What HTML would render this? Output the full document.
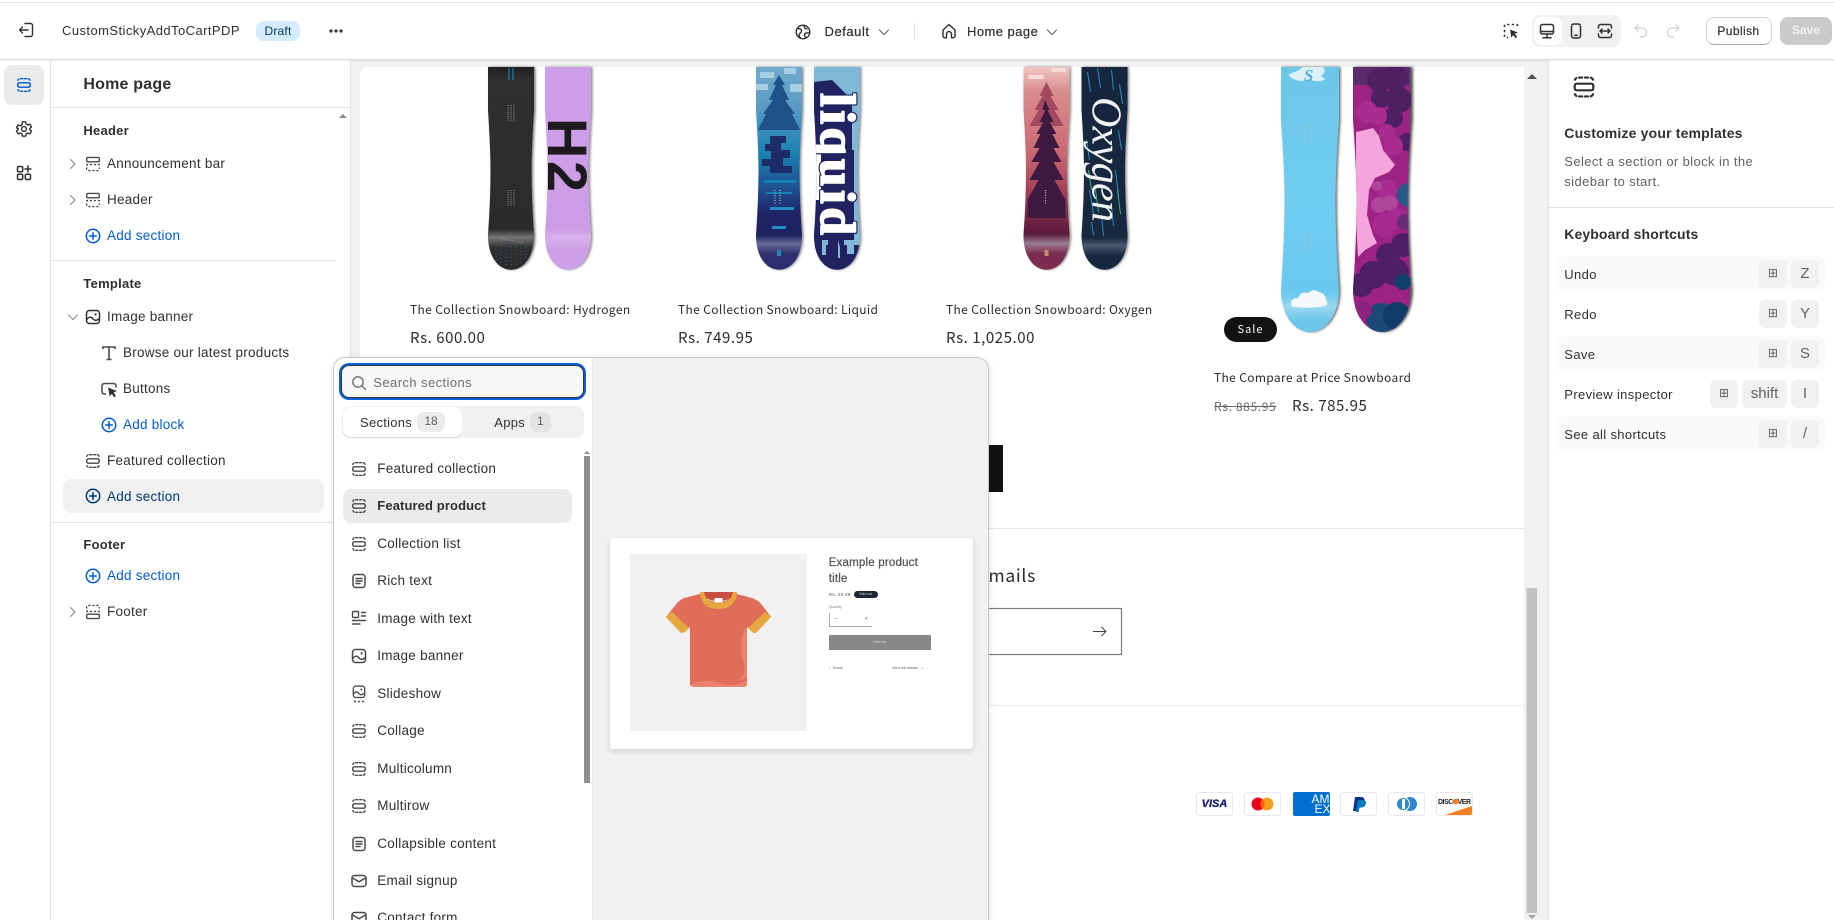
<!DOCTYPE html>
<html><head><meta charset="utf-8"><title>Editor</title>
<style>
html,body{margin:0;padding:0;width:1834px;height:920px;overflow:hidden;background:#fff}
body{font-family:"Liberation Sans",sans-serif;color:#303030;position:relative}
.a{position:absolute;white-space:nowrap}
.t{position:absolute;white-space:nowrap;line-height:20px;font-size:13.5px;letter-spacing:.25px;color:#303030}
.b{font-weight:700;font-size:13px;letter-spacing:.25px}
.blue{color:#005bd3}
.n{color:#00367a}
.g{color:#616161}
.p{position:absolute;white-space:nowrap;font-family:"Noto Sans CJK JP",sans-serif;color:#2b2b2b;line-height:24px}
.pt{font-size:12px;letter-spacing:.35px}
.pp{font-size:15px;letter-spacing:.55px}
.i{position:absolute;width:20px;height:20px;overflow:visible}
.key{position:absolute;width:28px;height:28px;border-radius:6px;background:#f1f1f1;text-align:center;line-height:27px;font-size:15px;color:#616161}
.key.c{font-family:"DejaVu Sans",sans-serif;font-size:12px}
.row{position:absolute;left:1556px;width:269px;height:36px;border-radius:8px;background:#fafafa}
.pay{position:absolute;top:792px;width:37px;height:24px;border:1px solid #e8e8e8;border-radius:3px;box-sizing:border-box;background:#fff;overflow:hidden;text-align:center}
.k{font-size:13px;letter-spacing:.35px}
</style></head><body>
<svg width="0" height="0" style="position:absolute"><defs>
<g id="sec" fill="none" stroke-width="1.45" stroke-linecap="round"><rect x="3.8" y="7.8" width="12.4" height="4.4" rx="1.4"/><path d="M3.8 5.6V5.7A2.4 2.4 0 0 1 6.2 3.7H13.8A2.4 2.4 0 0 1 16.2 5.7V5.6" stroke-dasharray="2.1 1.8"/><path d="M3.8 14.4V14.3A2.4 2.4 0 0 0 6.2 16.3H13.8A2.4 2.4 0 0 0 16.2 14.3V14.4" stroke-dasharray="2.1 1.8"/></g>
<g id="hdr" fill="none" stroke-width="1.4"><rect x="3.7" y="3.4" width="12.6" height="4.4" rx="1.2"/><path d="M3.7 11.5V10.6H16.3V11.5M3.7 13.5V15.4A1.2 1.2 0 0 0 4.9 16.6H15.1A1.2 1.2 0 0 0 16.3 15.4V13.5" stroke-dasharray="2.2 1.8"/></g>
<g id="ftr" fill="none" stroke-width="1.4"><rect x="3.7" y="12.2" width="12.6" height="4.4" rx="1.2"/><path d="M3.7 8.5V9.4H16.3V8.5M3.7 6.5V4.6A1.2 1.2 0 0 1 4.9 3.4H15.1A1.2 1.2 0 0 1 16.3 4.6V6.5" stroke-dasharray="2.2 1.8"/></g>
<g id="plus" fill="none" stroke-width="1.5"><circle cx="10" cy="10" r="6.7"/><path d="M10 6.7V13.3M6.7 10H13.3" stroke-linecap="round"/></g>
<g id="img" fill="none" stroke-width="1.5"><rect x="3.5" y="3.5" width="13" height="13" rx="3"/><circle cx="12.6" cy="7.4" r="1.1" fill="currentColor" stroke="none"/><path d="M3.8 12.5C6 9.5 8 9.5 10 12c2 2.2 3.6 1.6 6.4-.4"/></g>
<g id="txt" fill="none" stroke-width="1.5"><rect x="4" y="3.5" width="12" height="13" rx="2.5"/><path d="M7 7.5H13M7 10H13M7 12.5H11" stroke-linecap="round"/></g>
<g id="mail" fill="none" stroke-width="1.5"><rect x="3" y="4.5" width="14" height="11" rx="2.5"/><path d="M3.5 7L10 10.8 16.5 7"/></g>
<path id="cv" d="M7.5 5.5L12 10 7.5 14.5" fill="none" stroke-width="1.2" stroke-linecap="round" stroke-linejoin="round"/>
<path id="dn" d="M5.5 8L10 12.5 14.5 8" fill="none" stroke-width="1.1" stroke-linecap="round" stroke-linejoin="round"/>
<path id="bp" d="M0 67H46V110Q43.5 150 43.5 170Q43.5 200 46 235C46 258 35 269.7 23 269.7C11 269.7 0 258 0 235Q2.5 200 2.5 170Q2.5 150 0 110Z"/>
<path id="bq" d="M0 67H58V120Q54.5 170 54.5 200Q54.5 240 58 290C58 316 44 332 29 332C14 332 0 316 0 290Q3.5 240 3.5 200Q3.5 170 0 120Z"/>
<clipPath id="cb"><use href="#bp"/></clipPath>
<clipPath id="cq"><use href="#bq"/></clipPath>
<filter id="sh" x="-30%" y="-5%" width="160%" height="110%"><feGaussianBlur stdDeviation="1.2"/></filter>
<linearGradient id="gA" x1="0" y1="0" x2="0" y2="1"><stop offset="0" stop-color="#1f1f1f"/><stop offset=".06" stop-color="#2f2f2f"/><stop offset=".8" stop-color="#2b2b2b"/><stop offset=".84" stop-color="#757575"/><stop offset=".89" stop-color="#2e2e2e"/><stop offset="1" stop-color="#2a2a2a"/></linearGradient>
<linearGradient id="gB" x1="0" y1="0" x2="0" y2="1"><stop offset="0" stop-color="#cd9fe8"/><stop offset=".8" stop-color="#cc9de6"/><stop offset=".84" stop-color="#d6b2ea"/><stop offset=".9" stop-color="#cd9fe6"/></linearGradient>
<linearGradient id="gC" x1="0" y1="0" x2="0" y2="1"><stop offset="0" stop-color="#71aacd"/><stop offset=".18" stop-color="#5d9dc4"/><stop offset=".42" stop-color="#1b82b2"/><stop offset=".6" stop-color="#1f4f90"/><stop offset=".72" stop-color="#1f2466"/><stop offset=".83" stop-color="#1d2462"/><stop offset=".87" stop-color="#6c6a9c"/><stop offset=".92" stop-color="#30306e"/><stop offset="1" stop-color="#2b2c70"/></linearGradient>
<linearGradient id="gE" x1="0" y1="0" x2="0" y2="1"><stop offset="0" stop-color="#eec6c2"/><stop offset=".12" stop-color="#d98c8c"/><stop offset=".42" stop-color="#c96a72"/><stop offset=".62" stop-color="#a13f56"/><stop offset=".82" stop-color="#5a1a3a"/><stop offset=".87" stop-color="#9c7a90"/><stop offset=".92" stop-color="#7a2c50"/><stop offset="1" stop-color="#7d2d50"/></linearGradient>
<linearGradient id="gF" x1="0" y1="0" x2="0" y2="1"><stop offset="0" stop-color="#16263f"/><stop offset=".84" stop-color="#17283f"/><stop offset=".88" stop-color="#4a5a6e"/><stop offset=".93" stop-color="#16283f"/></linearGradient>
<linearGradient id="gG" x1="0" y1="0" x2="0" y2="1"><stop offset="0" stop-color="#6cc6e8"/><stop offset=".5" stop-color="#70cdf0"/><stop offset=".85" stop-color="#69c8ee"/><stop offset=".9" stop-color="#9cd8f0"/><stop offset=".95" stop-color="#6ec6e8"/></linearGradient>
</defs></svg>

<!-- preview background -->
<div class="a" style="left:351px;top:59px;width:1197px;height:861px;background:#f1f1f1"></div>
<div class="a" style="left:360px;top:67px;width:1164px;height:853px;background:#fff;border-radius:8px 0 0 0"></div>

<svg class="a" style="left:0;top:0" width="1834" height="920" viewBox="0 0 1834 920">
<!-- Board A -->
<use href="#bp" transform="translate(489.5,0)" fill="#777" filter="url(#sh)"/>
<g transform="translate(488,0)" clip-path="url(#cb)"><rect width="46" height="203" y="67" fill="url(#gA)"/>
<path d="M21 68V80M25 68V80" stroke="#1e6e9e" stroke-width="1.5"/>
<path d="M20 105V121M23 105V121M26 105V121M20 190V206M23 190V206M26 190V206" stroke="#9a9a9a" stroke-dasharray="1 1.2"/>
<path d="M8 246V262M13 244V265M18 243V267M23 243V267M28 243V266M33 244V264M38 247V262" stroke="#2d6c92" stroke-dasharray="1 2.5"/>
<path d="M12 238L35 243" stroke="#999" stroke-dasharray="1 1.5"/></g>
<!-- Board B -->
<use href="#bp" transform="translate(546.5,0)" fill="#888" filter="url(#sh)"/>
<g transform="translate(545,0)" clip-path="url(#cb)"><rect width="46" height="203" y="67" fill="url(#gB)"/>
<text transform="translate(3,118) rotate(90)" font-family="Liberation Sans" font-weight="700" font-size="56" fill="#1c1a1e" textLength="74">H2</text></g>
<!-- Board C liquid L -->
<use href="#bp" transform="translate(757.5,0)" fill="#888" filter="url(#sh)"/>
<g transform="translate(756,0)" clip-path="url(#cb)"><rect width="46" height="203" y="67" fill="url(#gC)"/>
<path d="M4 72H18V78H4ZM28 68H40V74H28ZM0 84H12V90H0ZM34 84H46V92H34Z" fill="#a8cee2"/>
<path d="M23 75L29 85H26L33 100H29L39 114H36L44 130H2L10 114H7L17 100H13L20 85H17Z" fill="#1f5288"/>
<path d="M14 136H30V143H25V150H34V158H27V166H36V173H14V166H6V159H15V151H9V144H14Z" fill="#1d2c66"/>
<path d="M8 180H40V183H8ZM10 192H36V194H10Z" fill="#1480b6"/>
<path d="M19 190V205M24 190V205" stroke="#cfd6e6" stroke-dasharray="1 1.5"/>
<path d="M14 207H38V210H14ZM16 226H30V229H16Z" fill="#1f8fc6"/><rect x="21" y="250" width="4" height="6" fill="#2588b6"/></g>
<!-- Board D liquid R -->
<use href="#bp" transform="translate(815.5,0)" fill="#888" filter="url(#sh)"/>
<g transform="translate(814,0)" clip-path="url(#cb)"><rect width="46" height="203" y="67" fill="#7fb7d6"/>
<path d="M0 82L18 80L38 100V150H40V240H30V262L24 240V262H14V240H8V262H0Z" fill="#21225f"/>
<path d="M0 145H7V200H0Z" fill="#fff"/>
<path d="M0 245H6V255H12V245H20V258H26V245H33V254H40V245H46V270H0Z" fill="#21225f"/>
<text transform="translate(7,93) rotate(90)" font-family="Liberation Serif" font-weight="700" font-size="50" fill="#fff" stroke="#21225f" stroke-width="4" stroke-linejoin="round" textLength="142">liquid</text>
<text transform="translate(7,93) rotate(90)" font-family="Liberation Serif" font-weight="700" font-size="50" fill="#fff" stroke="#fff" stroke-width="1.6" stroke-linejoin="round" textLength="142">liquid</text></g>
<!-- Board E oxygen L -->
<use href="#bp" transform="translate(1025,0)" fill="#888" filter="url(#sh)"/>
<g transform="translate(1023.5,0)" clip-path="url(#cb)"><rect width="46" height="203" y="67" fill="url(#gE)"/>
<path d="M5 75H20V79H5ZM28 68H42V72H28Z" fill="#f5dcd8"/>
<path d="M23 82L30 96H27L35 110H31L40 126H6L15 110H11L19 96H16Z" fill="#a44a60"/>
<path d="M21.5 100L26 110H24L30 122H26L33 134H29L36 148H30L38 162H30L40 180H31L42 200V218H4V200L15 180H6L16 162H8L16 148H10L17 134H13L20 122H16L22 110H19Z" fill="#3f1a40"/>
<path d="M22 190V205" stroke="#cfc0c8" stroke-dasharray="1 1.5" stroke-width="1.2"/><rect x="21" y="250" width="4" height="6" fill="#c08a70"/></g>
<!-- Board F oxygen R -->
<use href="#bp" transform="translate(1083,0)" fill="#888" filter="url(#sh)"/>
<g transform="translate(1081.5,0)" clip-path="url(#cb)"><rect width="46" height="203" y="67" fill="url(#gF)"/>
<path d="M6 72L9 92M16 68L19 88M30 70L32 90M38 84L41 104M5 140L8 160M37 130L40 150M8 190L12 214M34 170L37 196M20 215L22 236M30 205L32 226M10 222L12 235" stroke="#2a8cc0" stroke-width="1"/>
<path d="M7 170L10 190M36 190L39 214M14 190L17 212" stroke="#2fb88a" stroke-width="1"/>
<text transform="translate(11,97) rotate(90)" font-family="Liberation Serif" font-style="italic" font-size="42" fill="#f2f4f4" textLength="125">Oxygen</text></g>
<!-- Board G -->
<use href="#bq" transform="translate(1282.5,0)" fill="#666" filter="url(#sh)"/>
<g transform="translate(1281,0)" clip-path="url(#cq)"><rect width="58" height="266" y="67" fill="url(#gG)"/>
<path d="M8 74Q16 72 22 67H42Q46 72 40 76Q44 80 46 78Q38 84 28 79Q18 84 8 76Z" fill="#dcf0f8"/>
<text x="23" y="81" font-family="Liberation Serif" font-weight="700" font-style="italic" font-size="17" fill="#4fb0de">S</text>
<path d="M24 125V145M30 125V145M24 232V252M30 232V252" stroke="#b8c8b8" stroke-dasharray="1 1.5"/>
<path d="M10 304Q10 298 17 298Q20 291 27 293Q32 288 38 292Q45 294 45 300Q48 304 44 306Q30 309 14 307Q10 307 10 304Z" fill="#f4f8fa"/>
</g>
<!-- Board H -->
<use href="#bq" transform="translate(1355,0)" fill="#555" filter="url(#sh)"/>
<g transform="translate(1353,0)" clip-path="url(#cq)"><rect width="57" height="266" y="67" fill="#9c2384"/>
<rect y="67" width="57" height="18" fill="#5a2c6e"/>
<g fill="#4e1f62"><circle cx="26" cy="80" r="12"/><circle cx="42" cy="78" r="13"/><circle cx="28" cy="98" r="10"/><circle cx="46" cy="100" r="13"/><circle cx="40" cy="118" r="10"/><circle cx="54" cy="142" r="9"/></g>
<g fill="#a92c90"><circle cx="14" cy="112" r="11"/><circle cx="25" cy="116" r="9"/><circle cx="34" cy="132" r="8"/></g>
<path d="M3 132L12 130L20 128L26 136L30 150L42 165L36 172L22 178L16 190L14 215L20 235L24 243L12 250L5 257L3 220Z" fill="#f6a4dc"/>
<g fill="#a92c90"><circle cx="40" cy="146" r="10"/><circle cx="34" cy="190" r="10"/></g>
<g fill="#b0459c"><circle cx="26" cy="205" r="8"/><circle cx="37" cy="203" r="8"/><circle cx="24" cy="186" r="5"/></g>
<g fill="#a62a90"><circle cx="32" cy="225" r="12"/><circle cx="44" cy="218" r="10"/></g>
<circle cx="56" cy="195" r="12" fill="#245a88"/><circle cx="52" cy="222" r="8" fill="#6a2c78"/>
<g fill="#4f1f66"><circle cx="35" cy="255" r="12"/><circle cx="50" cy="245" r="12"/><circle cx="20" cy="275" r="14"/><circle cx="42" cy="272" r="14"/><circle cx="8" cy="285" r="12"/></g>
<circle cx="50" cy="282" r="8" fill="#0f3f6c"/><circle cx="28" cy="318" r="15" fill="#1b4a78"/><circle cx="44" cy="316" r="14" fill="#113a66"/><circle cx="10" cy="310" r="9" fill="#8e2280"/></g>

<!-- up arrow preview scrollbar -->
<path d="M1527 79L1532 74 1537 79Z" fill="#505050"/>
<rect x="1526.5" y="588" width="10.5" height="325" fill="#c1c1c1"/>
<path d="M1528 915H1536L1532 919Z" fill="#a3a3a3"/>
<!-- lines -->
<rect x="360" y="528" width="1164" height="1" fill="#e8e8e8"/>
<rect x="360" y="705" width="1164" height="1" fill="#ededed"/>
<rect x="700" y="445" width="303" height="47" fill="#121212"/>
<rect x="700" y="608.5" width="421.5" height="46" fill="#fff" stroke="#7c7c7c" stroke-width="1.2"/>
<path d="M1093 631.5H1106M1101.5 627L1106 631.5 1101.5 636" fill="none" stroke="#444" stroke-width="1"/>
</svg>

<div class="p pt" style="left:410px;top:298px">The Collection Snowboard: Hydrogen</div>
<div class="p pp" style="left:410px;top:326px">Rs. 600.00</div>
<div class="p pt" style="left:678px;top:298px">The Collection Snowboard: Liquid</div>
<div class="p pp" style="left:678px;top:326px">Rs. 749.95</div>
<div class="p pt" style="left:946px;top:298px">The Collection Snowboard: Oxygen</div>
<div class="p pp" style="left:946px;top:326px">Rs. 1,025.00</div>
<div class="a" style="left:1224px;top:317px;width:53px;height:25px;border-radius:13px;background:#121212;color:#fff;font-family:'Noto Sans CJK JP',sans-serif;font-size:11px;letter-spacing:1px;text-align:center;line-height:24px">Sale</div>
<div class="p pt" style="left:1214px;top:366px">The Compare at Price Snowboard</div>
<div class="p" style="left:1214px;top:395px;font-size:12px;letter-spacing:.65px;color:#666;text-decoration:line-through">Rs. 885.95</div>
<div class="p pp" style="left:1292px;top:394px">Rs. 785.95</div>
<div class="p" style="left:700px;width:336px;top:564px;text-align:right;font-size:17.5px;letter-spacing:.7px">Subscribe to our emails</div>

<!-- payment -->
<div class="pay" style="left:1196px;font:italic 700 11px/22px 'Liberation Sans',sans-serif;color:#1a1f71;-webkit-text-stroke:.3px #1a1f71">VISA</div>
<div class="pay" style="left:1244px"><svg width="35" height="22"><circle cx="13" cy="11" r="6.5" fill="#eb001b"/><circle cx="22" cy="11" r="6.5" fill="#f79e1b"/><path d="M17.5 6.3a6.5 6.5 0 0 1 0 9.4a6.5 6.5 0 0 1 0-9.4Z" fill="#ff5f00"/></svg></div>
<div class="a" style="left:1292.5px;top:792px;width:37px;height:24px;background:#016fd0;border-radius:2px;overflow:hidden;color:#fff;font:400 12px/9px 'Liberation Sans',sans-serif"><div style="position:absolute;left:19px;top:3px">AM</div><div style="position:absolute;left:22px;top:13px">EX</div></div>
<div class="pay" style="left:1340px"><svg width="35" height="22"><path d="M14 4H20Q24 4 23.5 8Q23 12.5 18 12.5H16.5L15.5 18H12Z" fill="#003087"/><path d="M16.8 7H22Q25.5 7.5 25 10.5Q24 14.5 20 14.5H18.5L17.5 19H14.8Z" fill="#0079c1"/></svg></div>
<div class="pay" style="left:1388px"><svg width="35" height="22"><circle cx="21" cy="11" r="7" fill="#2f87d0"/><circle cx="14" cy="11" r="7" fill="#fff"/><circle cx="14" cy="11" r="6" fill="#2f87d0"/><rect x="13" y="6" width="3" height="10" fill="#fff"/></svg></div>
<div class="pay" style="left:1436px"><svg width="35" height="22"><path d="M8 22L35 13V22Z" fill="#f48120"/><text x="1" y="11" font-family="Liberation Sans" font-weight="700" font-size="7" fill="#222" textLength="33">DISCOVER</text><circle cx="19" cy="8.5" r="2.8" fill="#f48120"/></svg></div>

<!-- top bar -->
<div class="a" style="left:0;top:0;width:1834px;height:59px;background:#fff;border-bottom:1px solid #dcdcdc;box-shadow:0 1px 2px rgba(0,0,0,.08);z-index:3"></div>
<div class="a" style="left:0;top:2px;width:1834px;height:1px;background:#eee4e8;z-index:4"></div>
<div class="a" style="left:0;top:0;width:1834px;height:60px;z-index:5">
<svg class="i" style="left:16px;top:20px"><path d="M9 3.5H14.5A2 2 0 0 1 16.5 5.5V14.5A2 2 0 0 1 14.5 16.5H9M12 10H3.5M6.5 7L3.5 10 6.5 13" fill="none" stroke="#303030" stroke-width="1.4" stroke-linecap="round" stroke-linejoin="round"/></svg>
<div class="t" style="left:62px;top:21px;font-size:13px;letter-spacing:.43px">CustomStickyAddToCartPDP</div>
<div class="a" style="left:256px;top:21px;width:44px;height:20px;border-radius:8px;background:#d5ebff;color:#003a5a;font-size:12px;text-align:center;line-height:20px;letter-spacing:.2px">Draft</div>
<svg class="i" style="left:326px;top:21px"><circle cx="5" cy="10" r="1.6" fill="#303030"/><circle cx="10" cy="10" r="1.6" fill="#303030"/><circle cx="15" cy="10" r="1.6" fill="#303030"/></svg>
<svg class="i" style="left:793px;top:21.5px"><g fill="none" stroke="#303030" stroke-width="1.4"><circle cx="10" cy="10" r="6.8"/><path d="M4 6.5C7 6.5 8.5 7 8.5 9S6 11 6 13 7.5 16 8 16.5M11 3.5C11 6 12.5 7 14.5 7M16.5 11C14 10.5 11.5 11 11.5 13S13 15.5 13.5 16"/></g></svg>
<div class="t" style="left:824.5px;top:21.5px;font-size:13px;letter-spacing:.55px;-webkit-text-stroke:.2px #303030">Default</div>
<svg class="i" style="left:874px;top:21.5px;stroke:#616161"><use href="#dn"/></svg>
<div class="a" style="left:914px;top:23px;width:1px;height:16px;background:#e3e3e3"></div>
<svg class="i" style="left:939px;top:21px"><path d="M10 3.5L16 9V15A1.8 1.8 0 0 1 14.2 16.8H12.5V13A2.5 2.5 0 0 0 7.5 13V16.8H5.8A1.8 1.8 0 0 1 4 15V9Z" fill="none" stroke="#303030" stroke-width="1.4" stroke-linejoin="round"/></svg>
<div class="t" style="left:967px;top:21.5px;font-size:13px;letter-spacing:.45px;-webkit-text-stroke:.2px #303030">Home page</div>
<svg class="i" style="left:1042px;top:21.5px;stroke:#616161"><use href="#dn"/></svg>
<svg class="i" style="left:1501px;top:21px"><path d="M3.5 6V4.5A1 1 0 0 1 4.5 3.5H15.5A1 1 0 0 1 16.5 4.5V7M3.5 9V15.5A1 1 0 0 0 4.5 16.5H7" fill="none" stroke="#303030" stroke-width="1.6" stroke-dasharray="2.2 2.4"/><path d="M9 8.5L17 11.5 13.8 12.8 16.2 16 14.6 17.2 12.2 14 10.3 16.8Z" fill="#303030"/></svg>
<div class="a" style="left:1531.5px;top:15px;width:89.5px;height:32px;background:#f1f1f1;border-radius:8px"></div>
<div class="a" style="left:1533.5px;top:17px;width:28px;height:28px;background:#fff;border-radius:7px"></div>
<svg class="i" style="left:1537px;top:21px"><g fill="none" stroke="#303030" stroke-width="1.5"><rect x="3.5" y="3.5" width="13" height="9.5" rx="2"/><path d="M3.5 10.5H16.5M10 13V16.5M6 16.8H14" stroke-linecap="round"/></g></svg>
<svg class="i" style="left:1566px;top:21px"><g fill="none" stroke="#303030" stroke-width="1.5"><rect x="5.5" y="3" width="9" height="14" rx="2.2"/><path d="M8.8 14.2H11.2" stroke-linecap="round"/></g></svg>
<svg class="i" style="left:1595px;top:21px"><g fill="none" stroke="#303030" stroke-width="1.5" stroke-linecap="round" stroke-linejoin="round"><path d="M3.5 7V5.5A2 2 0 0 1 5.5 3.5H14.5A2 2 0 0 1 16.5 5.5V7M3.5 13V14.5A2 2 0 0 0 5.5 16.5H14.5A2 2 0 0 0 16.5 14.5V13M5 10H15M7 8L5 10 7 12M13 8L15 10 13 12"/></g></svg>
<svg class="i" style="left:1631px;top:21px"><path d="M7 4L4 7 7 10M4 7H11A4.5 4.5 0 0 1 11 16H9" fill="none" stroke="#d6d6d6" stroke-width="1.5" stroke-linecap="round" stroke-linejoin="round"/></svg>
<svg class="i" style="left:1663px;top:21px"><path d="M13 4L16 7 13 10M16 7H9A4.5 4.5 0 0 0 9 16H11" fill="none" stroke="#d6d6d6" stroke-width="1.5" stroke-linecap="round" stroke-linejoin="round"/></svg>
<div class="a" style="left:1705.5px;top:17px;width:66px;height:28px;box-sizing:border-box;background:#fff;border:1px solid #d4d4d4;border-bottom:1.5px solid #a8a8a8;border-radius:8px;text-align:center;font-size:12px;line-height:26px;letter-spacing:.4px;font-weight:400;-webkit-text-stroke:.2px #303030">Publish</div>
<div class="a" style="left:1780px;top:17px;width:52px;height:28px;background:#cacaca;border-radius:8px;text-align:center;color:#f4f4f4;font-size:12px;line-height:27px;font-weight:700">Save</div>
</div>

<!-- left rail -->
<div class="a" style="left:0;top:60px;width:50px;height:860px;background:#fff;border-right:1px solid #e3e3e3;z-index:2"></div>
<div class="a" style="left:4px;top:65px;width:40px;height:40px;background:#ebebeb;border-radius:8px;z-index:2"></div>
<svg class="i" style="left:14px;top:75px;z-index:2;stroke:#005bd3"><use href="#sec"/></svg>
<svg class="i" style="left:14px;top:119px;z-index:2"><circle cx="10" cy="10" r="2.4" fill="none" stroke="#303030" stroke-width="1.4"/><path d="M8.4 2.8h3.2l.5 2.2 1.6.9 2.2-.7 1.6 2.8-1.7 1.5v1l1.7 1.5-1.6 2.8-2.2-.7-1.6.9-.5 2.2H8.4l-.5-2.2-1.6-.9-2.2.7-1.6-2.8 1.7-1.5v-1L2.5 8.9l1.6-2.8 2.2.7 1.6-.9z" fill="none" stroke="#303030" stroke-width="1.4" stroke-linejoin="round"/></svg>
<svg class="i" style="left:14px;top:163px;z-index:2"><g fill="none" stroke="#303030" stroke-width="1.5"><rect x="3.5" y="3.5" width="5.2" height="5.2" rx="1.2"/><rect x="3.5" y="11.3" width="5.2" height="5.2" rx="1.2"/><rect x="11.3" y="11.3" width="5.2" height="5.2" rx="1.2"/><path d="M13.9 3V9M10.9 6H16.9" stroke-linecap="round"/></g></svg>

<!-- sidebar -->
<div class="a" style="left:51px;top:60px;width:300px;height:860px;background:#fff;border-right:1px solid #e3e3e3;box-sizing:border-box;z-index:2"></div>
<div style="position:absolute;left:0;top:0;z-index:2;width:0;height:0">
<div class="t" style="left:83.4px;top:74.5px;font-weight:700;font-size:16px;letter-spacing:.2px">Home page</div>
<div class="a" style="left:51px;top:107px;width:299px;height:1px;background:#e3e3e3"></div>
<svg class="a" style="left:339px;top:113px" width="8" height="6"><path d="M0 5L4 1 8 5Z" fill="#8a8a8a"/></svg>

<div class="t b" style="left:83.4px;top:120.7px">Header</div>
<svg class="i" style="left:63px;top:153.5px;stroke:#8a8a8a"><use href="#cv"/></svg>
<svg class="i" style="left:83px;top:153.5px;stroke:#4a4a4a"><use href="#hdr"/></svg>
<div class="t" style="left:107px;top:153.5px">Announcement bar</div>
<svg class="i" style="left:63px;top:189.5px;stroke:#8a8a8a"><use href="#cv"/></svg>
<svg class="i" style="left:83px;top:189.5px;stroke:#4a4a4a"><use href="#hdr"/></svg>
<div class="t" style="left:107px;top:189.5px">Header</div>
<svg class="i" style="left:83px;top:225.5px;stroke:#005bd3"><use href="#plus"/></svg>
<div class="t blue" style="left:107px;top:225.5px">Add section</div>
<div class="a" style="left:51px;top:260px;width:285px;height:1px;background:#e3e3e3"></div>

<div class="t b" style="left:83.4px;top:273.7px">Template</div>
<svg class="i" style="left:63px;top:306.7px;stroke:#8a8a8a"><use href="#dn"/></svg>
<svg class="i" style="left:83px;top:306.7px;stroke:#303030;color:#303030"><use href="#img"/></svg>
<div class="t" style="left:107px;top:306.7px">Image banner</div>
<svg class="i" style="left:99px;top:342.7px"><path d="M4 6V4H16V6M10 4V16.5M7.5 16.5H12.5" fill="none" stroke="#4a4a4a" stroke-width="1.6"/></svg>
<div class="t" style="left:123px;top:342.7px">Browse our latest products</div>
<svg class="i" style="left:99px;top:378.7px"><path d="M7 15H5.5A2.5 2.5 0 0 1 3 12.5V7A2.5 2.5 0 0 1 5.5 4.5H14.5A2.5 2.5 0 0 1 17 7V8.5" fill="none" stroke="#4a4a4a" stroke-width="1.6"/><path d="M9 8.5L18 12 14.5 13.4 17 17 15.2 18.2 12.8 14.8 10.8 17.5Z" fill="#303030"/></svg>
<div class="t" style="left:123px;top:378.7px">Buttons</div>
<svg class="i" style="left:99px;top:414.7px;stroke:#005bd3"><use href="#plus"/></svg>
<div class="t blue" style="left:123px;top:414.7px">Add block</div>
<svg class="i" style="left:83px;top:450.7px;stroke:#4a4a4a"><use href="#sec"/></svg>
<div class="t" style="left:107px;top:450.7px">Featured collection</div>
<div class="a" style="left:63px;top:479px;width:261px;height:34px;background:#f1f1f1;border-radius:8px"></div>
<svg class="i" style="left:83px;top:486px;stroke:#00367a"><use href="#plus"/></svg>
<div class="t n" style="left:107px;top:486.7px">Add section</div>
<div class="a" style="left:51px;top:521.5px;width:285px;height:1px;background:#e3e3e3"></div>
<div class="t b" style="left:83.4px;top:534.7px">Footer</div>
<svg class="i" style="left:83px;top:566px;stroke:#005bd3"><use href="#plus"/></svg>
<div class="t blue" style="left:107px;top:566px">Add section</div>
<svg class="i" style="left:63px;top:602px;stroke:#8a8a8a"><use href="#cv"/></svg>
<svg class="i" style="left:83px;top:602px;stroke:#4a4a4a"><use href="#ftr"/></svg>
<div class="t" style="left:107px;top:602px">Footer</div>
</div>

<!-- right panel -->
<div class="a" style="left:1548px;top:60px;width:286px;height:860px;background:#fff;border-left:1px solid #e3e3e3;box-sizing:border-box;z-index:2"></div>
<div style="position:absolute;left:0;top:0;z-index:2;width:0;height:0">
<svg class="a" style="left:1569px;top:72px;overflow:visible" width="30" height="30" viewBox="0 0 20 20"><g stroke="#303030"><use href="#sec"/></g></svg>
<div class="t" style="left:1564.3px;top:122.7px;font-weight:700;font-size:14px;letter-spacing:.17px">Customize your templates</div>
<div class="t g" style="left:1564.3px;top:151.7px;letter-spacing:.39px;font-size:13px">Select a section or block in the</div>
<div class="t g" style="left:1564.3px;top:171.7px;letter-spacing:.39px;font-size:13px">sidebar to start.</div>
<div class="a" style="left:1549px;top:207px;width:285px;height:1px;background:#e3e3e3"></div>
<div class="t" style="left:1564.3px;top:224px;font-weight:700;font-size:14px;letter-spacing:.1px">Keyboard shortcuts</div>
<div class="row" style="top:256px"></div><div class="row" style="top:336px"></div><div class="row" style="top:416px"></div>
<div class="t k" style="left:1564.3px;top:265px">Undo</div>
<div class="key c" style="left:1759px;top:260px">⊞</div><div class="key" style="left:1791px;top:260px">Z</div>
<div class="t k" style="left:1564.3px;top:305px">Redo</div>
<div class="key c" style="left:1759px;top:300px">⊞</div><div class="key" style="left:1791px;top:300px">Y</div>
<div class="t k" style="left:1564.3px;top:345px">Save</div>
<div class="key c" style="left:1759px;top:340px">⊞</div><div class="key" style="left:1791px;top:340px">S</div>
<div class="t k" style="left:1564.3px;top:384.5px">Preview inspector</div>
<div class="key c" style="left:1710px;top:380px">⊞</div><div class="key" style="left:1742px;top:380px;width:45px">shift</div><div class="key" style="left:1791px;top:380px">I</div>
<div class="t k" style="left:1564.3px;top:425px">See all shortcuts</div>
<div class="key c" style="left:1759px;top:420px">⊞</div><div class="key" style="left:1791px;top:420px">/</div>
</div>

<!-- popover -->
<div class="a" style="left:333px;top:357px;width:656px;height:580px;border-radius:12px 12px 0 0;box-sizing:border-box;border:1px solid #c9c9c9;background:#f1f1f1;box-shadow:0 2px 8px rgba(0,0,0,.12);overflow:hidden;z-index:6">
 <div class="a" style="left:0;top:0;width:258px;height:580px;background:#fff;border-right:1px solid #e8e8e8"></div>
</div>
<div style="position:absolute;left:0;top:0;z-index:7;width:0;height:0">
<div class="a" style="left:340.5px;top:365.3px;width:243.5px;height:33px;box-sizing:border-box;border:1px solid #333;border-radius:8px;background:#f7f7f7;box-shadow:0 0 0 2px #0a5fdc"></div>
<svg class="i" style="left:349px;top:373px"><circle cx="9" cy="9" r="5.2" fill="none" stroke="#707070" stroke-width="1.4"/><path d="M13 13L16.5 16.5" stroke="#707070" stroke-width="1.4" stroke-linecap="round"/></svg>
<div class="t" style="left:373.3px;top:373px;color:#6f6f6f;font-size:13px;letter-spacing:.42px">Search sections</div>
<div class="a" style="left:342px;top:406px;width:242px;height:32px;border-radius:8px;background:#f1f1f1"></div>
<div class="a" style="left:343px;top:407px;width:119px;height:30px;border-radius:8px;background:#fff;box-shadow:0 1px 1px rgba(0,0,0,.12)"></div>
<div class="t" style="left:360px;top:413px;font-size:13px;letter-spacing:.27px">Sections</div>
<div class="a" style="left:417.3px;top:412px;width:27.4px;height:20px;border-radius:7px;background:#ebebeb;text-align:center;font-size:12px;line-height:18px;color:#616161">18</div>
<div class="t" style="left:494.3px;top:413px;font-size:13px;letter-spacing:.27px">Apps</div>
<div class="a" style="left:530px;top:412px;width:20.7px;height:20px;border-radius:7px;background:#e3e3e3;text-align:center;font-size:12px;line-height:18px;color:#616161">1</div>
<svg class="a" style="left:584px;top:450px" width="6" height="5"><path d="M0 4L3 1 6 4Z" fill="#8f8f8f"/></svg>
<div class="a" style="left:584px;top:456px;width:6px;height:327px;background:#8f8f8f"></div>
<div class="a" style="left:343.3px;top:489px;width:228.4px;height:33.7px;border-radius:8px;background:#ebebeb"></div>

<svg class="i" style="left:349px;top:458.5px;stroke:#4a4a4a"><use href="#sec"/></svg><div class="t" style="left:377.3px;top:458.5px">Featured collection</div>
<svg class="i" style="left:349px;top:496px;stroke:#4a4a4a"><use href="#sec"/></svg><div class="t" style="left:377.3px;top:495.6px;font-weight:700;font-size:13px;letter-spacing:.11px">Featured product</div>
<svg class="i" style="left:349px;top:533.5px;stroke:#4a4a4a"><use href="#sec"/></svg><div class="t" style="left:377.3px;top:533.5px">Collection list</div>
<svg class="i" style="left:349px;top:570.5px;stroke:#4a4a4a"><use href="#txt"/></svg><div class="t" style="left:377.3px;top:570.5px">Rich text</div>
<svg class="i" style="left:349px;top:608.4px"><g fill="none" stroke="#4a4a4a" stroke-width="1.4" stroke-linecap="round"><rect x="3.5" y="3.5" width="6" height="6" rx="1"/><path d="M12.5 4.5H16.5M12.5 8H16.5M3.5 12.5H16.5M3.5 16H11"/></g></svg><div class="t" style="left:377.3px;top:609px">Image with text</div>
<svg class="i" style="left:349px;top:645.8px;stroke:#4a4a4a;color:#4a4a4a"><use href="#img"/></svg><div class="t" style="left:377.3px;top:645.8px">Image banner</div>
<svg class="i" style="left:349px;top:683.6px;color:#4a4a4a"><g transform="translate(1.2,-1) scale(.88)" stroke="#4a4a4a"><use href="#img"/></g><circle cx="6" cy="17.5" r="1" fill="#4a4a4a"/><circle cx="10" cy="17.5" r="1" fill="#4a4a4a"/><circle cx="14" cy="17.5" r="1" fill="#4a4a4a"/></svg><div class="t" style="left:377.3px;top:683.6px">Slideshow</div>
<svg class="i" style="left:349px;top:720.7px;stroke:#4a4a4a"><use href="#sec"/></svg><div class="t" style="left:377.3px;top:720.7px">Collage</div>
<svg class="i" style="left:349px;top:758.5px;stroke:#4a4a4a"><use href="#sec"/></svg><div class="t" style="left:377.3px;top:758.5px">Multicolumn</div>
<svg class="i" style="left:349px;top:795.6px;stroke:#4a4a4a"><use href="#sec"/></svg><div class="t" style="left:377.3px;top:795.6px">Multirow</div>
<svg class="i" style="left:349px;top:833.5px;stroke:#4a4a4a"><use href="#txt"/></svg><div class="t" style="left:377.3px;top:833.5px">Collapsible content</div>
<svg class="i" style="left:349px;top:871px;stroke:#4a4a4a"><use href="#mail"/></svg><div class="t" style="left:377.3px;top:871px">Email signup</div>
<svg class="i" style="left:349px;top:908px;stroke:#4a4a4a"><use href="#mail"/></svg><div class="t" style="left:377.3px;top:908px">Contact form</div>

<!-- product card -->
<div class="a" style="left:609.5px;top:537.7px;width:363px;height:211px;background:#fff;border-radius:3px;box-shadow:0 2px 6px rgba(0,0,0,.16)"></div>
<div class="a" style="left:630px;top:553.7px;width:177px;height:177px;background:#f1f1f1"></div>
<svg class="a" style="left:0;top:0;overflow:visible" width="1" height="1">
<path d="M700 594L684 598Q678 601 674 607L666 617 681.7 633.3 690 627V684Q690 686.7 693 686.7H744Q747 686.7 747 684V627L754.3 633.3 771 617 762 605Q758 600 752 598L736.7 594Q718 610 700 594Z" fill="#e06c5a"/>
<path d="M700 592H736.7L736 596Q718 606 702 596Z" fill="#c94f40"/>
<path d="M700 592Q701 609 718.5 609 736 609 737 592L733 592Q731 603 718.5 603 706 603 704 592Z" fill="#e5a73e"/>
<rect x="714.5" y="598" width="8" height="4.5" fill="#fff"/>
<path d="M668 615L666 617 681 633 685 632 689 628 672 612Z" fill="#e5a73e"/>
<path d="M769 615L771 617 756 633 752 632 748 628 765 612Z" fill="#e5a73e"/>
<path d="M690 684Q705 678 720 683T747 680V684Q747 686.7 744 686.7H693Q690 686.7 690 684Z" fill="#ec8068"/>
<path d="M745 628Q738 645 743 660T738 680L747 678V628Z" fill="#ec8068"/>
</svg>
<div class="a" style="left:828.7px;top:554.7px;font-size:11.5px;line-height:16px;color:#555;letter-spacing:.2px;-webkit-text-stroke:.25px #555;filter:blur(.25px)">Example product<br>title</div>
<div class="a" style="left:828.7px;top:591px;font:4.5px/7px 'Liberation Sans',sans-serif;color:#555;letter-spacing:.3px">Rs. 28.99</div>
<div class="a" style="left:853.7px;top:590.7px;width:24px;height:7px;border-radius:4px;background:#1c2533;color:#ddd;font:3.5px/7px 'Liberation Sans',sans-serif;text-align:center">Sold out</div>
<div class="a" style="left:828.7px;top:604px;font:3.5px/6px 'Liberation Sans',sans-serif;color:#888">Quantity</div>
<div class="a" style="left:828.7px;top:612.7px;width:43px;height:14px;box-sizing:border-box;border-left:1px solid #aaa;border-bottom:1px solid #aaa;font:5px/13px 'Liberation Sans',sans-serif;color:#555;padding-left:5px">&#8211;<span style="position:absolute;left:35px">+</span></div>
<div class="a" style="left:828.7px;top:634.7px;width:102.3px;height:15px;background:#888;color:#ddd;font:3.5px/15px 'Liberation Sans',sans-serif;text-align:center">Sold out</div>
<div class="a" style="left:829px;top:665px;font:3.8px/6px 'Liberation Sans',sans-serif;color:#666">&#8593;&nbsp; Share</div>
<div class="a" style="left:892px;top:665px;font:3.8px/6px 'Liberation Sans',sans-serif;color:#666">View full details &nbsp;&#8594;</div>
</div>
</body></html>
